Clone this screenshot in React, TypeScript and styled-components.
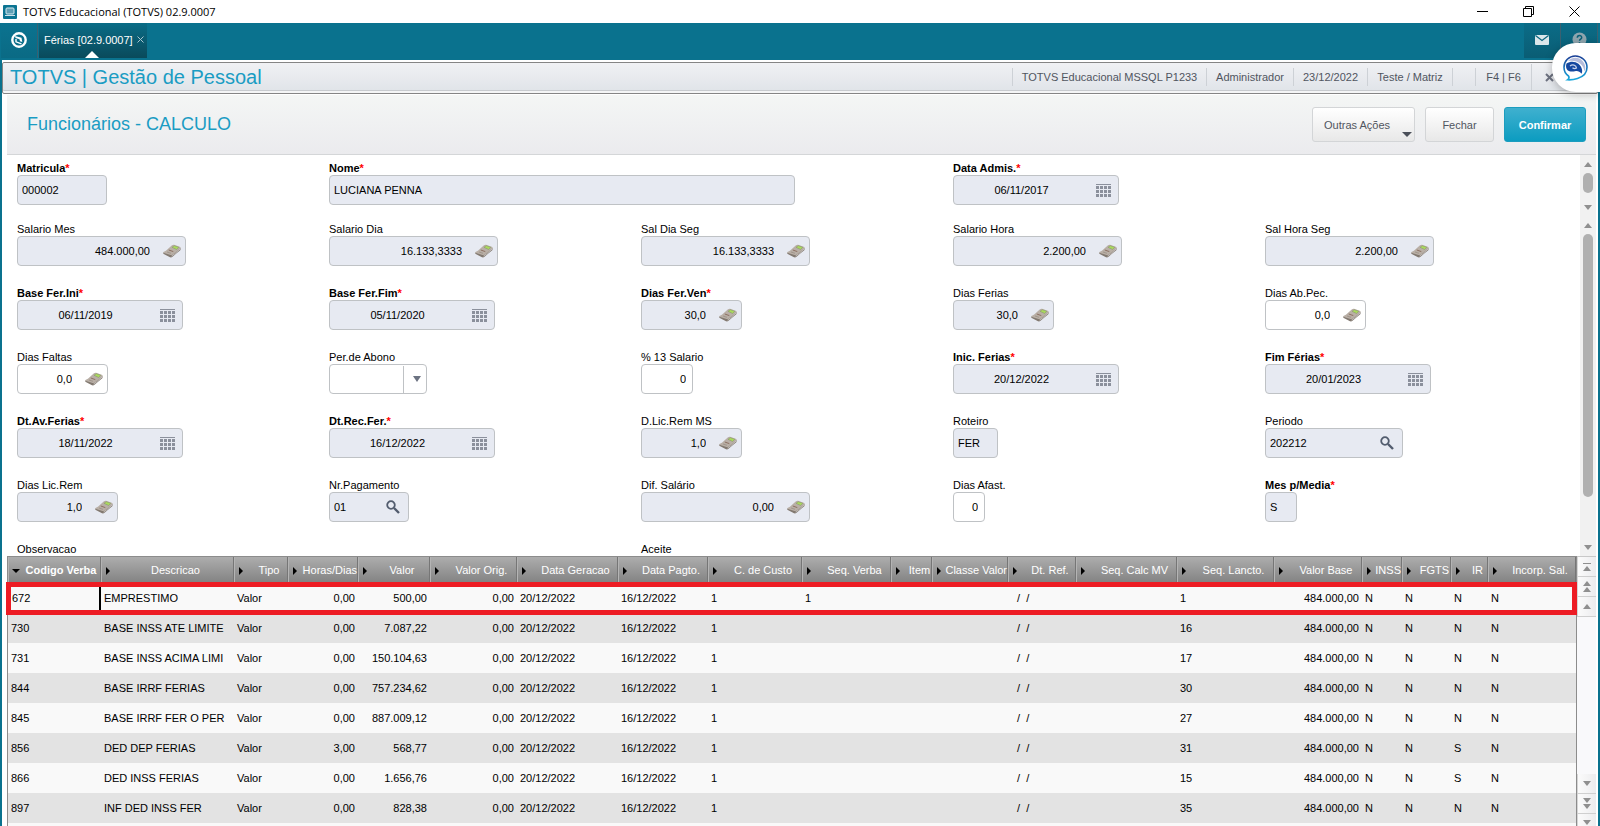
import React from "react";
import styled, { createGlobalStyle, css } from "styled-components";

const GlobalStyle = createGlobalStyle`
  * { box-sizing: border-box; }
  body { margin: 0; background: #fff; font-family: "Liberation Sans", Arial, sans-serif; font-size: 11px; color: #000; }
  button, input, select, textarea { font: inherit; color: inherit; }
  button { cursor: pointer; padding: 0; }
`;

/* ---------- window frame ---------- */

const Window = styled.div`
  display: flex;
  flex-direction: column;
  height: 100vh;
  overflow: hidden;
`;

const TitleBar = styled.header`
  display: flex;
  align-items: center;
  flex: 0 0 23px;
  padding: 0 3px;
  background: #fff;
`;

const WindowTitle = styled.span`
  flex: 1;
  margin-left: 6px;
  font-family: "Open Sans", "Noto Sans", sans-serif;
  font-size: 11px;
  line-height: 22px;
`;

const WindowButton = styled.button`
  display: flex;
  align-items: center;
  justify-content: center;
  width: 46px;
  height: 21px;
  border: 0;
  background: none;
`;

const TabBar = styled.nav`
  display: flex;
  flex: 0 0 37px;
  padding: 0 2px 2px 1px;
  background: #0a728e;
`;

const BarButton = styled.button<{ $dark?: boolean }>`
  display: flex;
  align-items: center;
  justify-content: center;
  width: 37px;
  padding-bottom: 2px;
  border: 0;
  border-right: 1px solid #3a6070;
  background: ${(p) =>
    p.$dark ? "linear-gradient(#0b6c87, #0a5d74)" : "linear-gradient(#0b7390, #0a6a84)"};
`;

const Tab = styled.div`
  position: relative;
  display: flex;
  align-items: center;
  gap: 4px;
  width: 108px;
  margin-left: 1px;
  padding: 0 0 2px 5px;
  color: #fff;
  background: linear-gradient(#0a6c86, #0a4a5b);
  &::after {
    content: "";
    position: absolute;
    left: 46px;
    bottom: 0;
    border: 7px solid transparent;
    border-top: 0;
    border-bottom-color: #fff;
  }
`;

const TabLabel = styled.button`
  border: 0;
  background: none;
  white-space: nowrap;
`;

const TabClose = styled.button`
  display: flex;
  border: 0;
  background: none;
`;

const Spacer = styled.div`
  flex: 1;
`;

const ChatButton = styled.button`
  position: absolute;
  top: 43px;
  right: 0;
  display: flex;
  align-items: center;
  justify-content: center;
  width: 48px;
  height: 49px;
  padding-right: 2px;
  border: 0;
  border-radius: 24px 0 0 24px;
  background: #fff;
  box-shadow: 0 2px 8px rgba(0, 0, 0, 0.25);
`;

/* ---------- module header ---------- */

const Body = styled.main`
  display: flex;
  flex: 1;
  flex-direction: column;
  min-height: 0;
  padding-top: 2px;
  border: solid #0a728e;
  border-width: 0 2px;
`;

const ModuleBar = styled.div`
  display: flex;
  align-items: center;
  flex: 0 0 32px;
  padding: 0 0 2px 7px;
  border: 1px solid #858585;
  border-radius: 2px;
  background: linear-gradient(#f0f1f4, #dfe3e8);
  box-shadow: inset 0 -2px 0 #f4f5f6, inset 0 -3px 0 #c8cbcf;
`;

const ModuleTitle = styled.h1`
  flex: 1;
  margin: 0;
  color: #1a9cc3;
  font-size: 20px;
  font-weight: 400;
  line-height: 28px;
`;

const SessionItem = styled.span<{ $width: number }>`
  display: flex;
  align-items: center;
  justify-content: center;
  width: ${(p) => p.$width}px;
  height: 18px;
  border-left: 1px solid #cdd1d6;
  color: #50555f;
`;

const SessionClose = styled.button`
  display: flex;
  align-items: center;
  width: 66px;
  height: 26px;
  padding-left: 13px;
  border: 0;
  border-left: 1px solid #cdd1d6;
  background: none;
`;

const Content = styled.div`
  display: flex;
  flex: 1;
  flex-direction: column;
  min-height: 0;
  padding: 1px 2px 0 5px;
`;

const PageHeader = styled.div`
  display: flex;
  align-items: center;
  gap: 10px;
  flex: 0 0 60px;
  padding: 0 10px 0 20px;
  border-bottom: 1px solid #d4d6d8;
  background: linear-gradient(#f4f6f5, #ebebee);
`;

const PageTitle = styled.h2`
  flex: 1;
  margin: 0;
  padding-bottom: 2px;
  color: #1a9cc3;
  font-size: 18px;
  font-weight: 400;
  line-height: 20px;
`;

const ActionButton = styled.button<{ $width: number; $primary?: boolean }>`
  position: relative;
  width: ${(p) => p.$width}px;
  height: 35px;
  border: 1px solid #d3d5d7;
  border-radius: 3px;
  color: #50555f;
  background: linear-gradient(#fff, #e8e8e8);
  ${(p) =>
    p.$primary &&
    css`
      border-color: #1c9dbf;
      color: #fff;
      font-weight: 700;
      background: linear-gradient(#3fb0cf, #0c9cc0);
    `}
`;

const MenuButton = styled(ActionButton)`
  padding: 0 22px 0 11px;
  text-align: left;
  &::after {
    content: "";
    position: absolute;
    right: 2px;
    bottom: 4px;
    border: 5px solid transparent;
    border-bottom: 0;
    border-top-color: #4a4f59;
  }
`;

/* ---------- form ---------- */

const Pane = styled.section<{ $height: number }>`
  display: flex;
  flex: 0 0 ${(p) => p.$height}px;
  overflow: hidden;
`;

const FieldGrid = styled.div`
  display: grid;
  flex: 1;
  grid-template-columns: repeat(5, 1fr);
  align-content: start;
  row-gap: 20px;
  padding: 6px 3px 0 10px;
`;

const FieldBlock = styled.div<{ $column: number; $span?: number }>`
  grid-column: ${(p) => p.$column} / span ${(p) => p.$span ?? 1};
`;

const FieldLabel = styled.label<{ $required?: boolean }>`
  display: block;
  line-height: 14px;
  font-weight: ${(p) => (p.$required ? 700 : 400)};
`;

const Asterisk = styled.span`
  color: #f00;
`;

const FieldBox = styled.div<{ $width: number; $locked?: boolean }>`
  display: flex;
  align-items: center;
  width: ${(p) => p.$width}px;
  height: 30px;
  border: 1px solid #bfc2c5;
  border-radius: 4px;
  background: ${(p) => (p.$locked ? "#e7eaf2" : "#fff")};
`;

const trailingSpace: Record<Kind, number> = {
  text: 0,
  search: 0,
  select: 0,
  integer: 6,
  date: 11,
  number: 13,
};

const FieldInput = styled.input<{ $kind: Kind }>`
  flex: 1;
  min-width: 0;
  height: 28px;
  padding: 0 ${(p) => trailingSpace[p.$kind]}px 0 4px;
  border: 0;
  outline: 0;
  background: none;
  text-align: ${(p) =>
    p.$kind === "number" || p.$kind === "integer" ? "right" : p.$kind === "date" ? "center" : "left"};
`;

const IconButton = styled.button`
  display: flex;
  align-items: center;
  justify-content: flex-start;
  width: 22px;
  height: 28px;
  border: 0;
  background: none;
`;

const SelectBox = styled(FieldBox)`
  position: relative;
  &::before {
    content: "";
    position: absolute;
    top: 1px;
    right: 22px;
    bottom: 0;
    border-left: 1px solid #bfc2c5;
  }
  &::after {
    content: "";
    position: absolute;
    right: 5px;
    border: 4px solid transparent;
    border-top: 6px solid #6c7382;
    border-bottom: 0;
  }
`;

const SelectInput = styled.select`
  width: 100%;
  height: 28px;
  border: 0;
  appearance: none;
  background: none;
`;

const ScrollTrack = styled.div`
  display: flex;
  flex: 0 0 16px;
  flex-direction: column;
  align-items: center;
  background: #f1f1f1;
`;

const ScrollStep = styled.button`
  display: flex;
  align-items: center;
  justify-content: center;
  flex: 0 0 18px;
  width: 16px;
  border: 0;
  background: none;
`;

const ScrollThumb = styled.div<{ $length: number }>`
  width: 10px;
  height: ${(p) => p.$length}px;
  border-radius: 5px;
  background: #b0b0b0;
`;

/* ---------- grid ---------- */

const GridSection = styled.section`
  display: flex;
  flex: 1 0 278px;
`;

const GridFrame = styled.div`
  position: relative;
  flex: 1;
  min-width: 0;
  border: solid #8c8c8c;
  border-width: 1px 1px 0;
  background: #f9f9f9;
`;

const DataTable = styled.table`
  width: 100%;
  table-layout: fixed;
  border-collapse: separate;
  border-spacing: 0;
`;

const HeadCell = styled.th<{ $sorted?: boolean }>`
  height: 26px;
  padding: 0;
  border-left: 1px solid #b4b4b4;
  border-right: 1px solid #767676;
  color: #fff;
  font-weight: ${(p) => (p.$sorted ? 700 : 400)};
  background: linear-gradient(#adadad, #828282);
`;

/* The gap after the sort mark gives way when a title needs the room. */
const HeadInner = styled.div<{ $sorted?: boolean }>`
  display: flex;
  align-items: center;
  &::before {
    content: "";
    flex: 0 1 ${(p) => (p.$sorted ? 2 : 8)}px;
  }
`;

const HeadText = styled.span`
  flex: 1 0 auto;
  line-height: 16px;
  text-align: center;
  white-space: nowrap;
`;

const SortMark = styled.span<{ $sorted?: boolean }>`
  flex: 0 0 auto;
  order: -1;
  margin: 2px 0 0 ${(p) => (p.$sorted ? 3 : 4)}px;
  border: solid transparent;
  ${(p) =>
    p.$sorted
      ? css`
          border-width: 4px 4px 0;
          border-top-color: #000;
        `
      : css`
          border-width: 4px 0 4px 4px;
          border-left-color: #000;
        `}
`;

const BodyRow = styled.tr`
  background: #f9f9f9;
  &:nth-child(even) {
    background: #e3e3e3;
  }
`;

const Cell = styled.td<{ $numeric?: boolean; $active?: boolean }>`
  height: 30px;
  padding: 0 3px;
  overflow: hidden;
  line-height: 16px;
  text-align: ${(p) => (p.$numeric ? "right" : "left")};
  white-space: pre;
  ${(p) =>
    p.$active &&
    css`
      padding-left: 4px;
      border-right: 2px solid #000;
    `}
`;

const RowHighlight = styled.div`
  position: absolute;
  top: 25px;
  left: -2px;
  right: -1px;
  height: 33px;
  border: 5px solid #ed1c24;
  pointer-events: none;
`;

const GridNav = styled.div`
  display: flex;
  flex: 0 0 19px;
  flex-direction: column;
  border-top: 1px solid #c8c8c8;
  background: #f9f9fb;
`;

const NavButton = styled.button`
  display: flex;
  flex: 0 0 20px;
  flex-direction: column;
  align-items: center;
  justify-content: center;
  gap: 1px;
  border: 0;
  border-left: 1px solid #d5d5d5;
  border-bottom: 1px solid #cfcfcf;
  background: linear-gradient(90deg, #fbfbfb, #ececee);
`;

const Triangle = styled.span<{ $down?: boolean }>`
  border: solid transparent;
  border-width: ${(p) => (p.$down ? "5px 4px 0" : "0 4px 5px")};
  ${(p) => (p.$down ? "border-top-color" : "border-bottom-color")}: #8f8f8f;
`;

const Bar = styled.span`
  width: 8px;
  height: 1px;
  margin-bottom: 1px;
  background: #8f8f8f;
`;

/* ---------- icons ---------- */

const AppIcon = () => (
  <svg width="14" height="14" viewBox="0 0 14 14" aria-hidden="true">
    <rect width="14" height="14" rx="1" fill="#0b7492" />
    <rect x="3" y="3" width="8" height="6" rx="1" fill="#5f9fb5" stroke="#d7e8ee" />
    <path d="M2 10h10v1H2z" fill="#cfe2e9" />
  </svg>
);

const MinimizeIcon = () => (
  <svg width="11" height="11" viewBox="0 0 11 11" aria-hidden="true">
    <path d="M0 5.500h11" stroke="#000" />
  </svg>
);

const RestoreIcon = () => (
  <svg width="11" height="11" viewBox="0 0 11 11" fill="none" stroke="#000" aria-hidden="true">
    <path d="M.5 2.500h8v8h-8zM2.500 2.500v-2h8v8h-2" />
  </svg>
);

const CloseIcon = () => (
  <svg width="11" height="11" viewBox="0 0 11 11" stroke="#000" aria-hidden="true">
    <path d="M.5.5l10 10M10.500.5l-10 10" />
  </svg>
);

const LogoIcon = () => (
  <svg width="16" height="16" viewBox="0 0 16 16" fill="none" aria-hidden="true">
    <circle cx="8" cy="8" r="6.700" stroke="#fff" strokeWidth="2.400" />
    <path d="M4 4l6.500 1.800.8 4.200-2.300-.8-.5-2L4.500 6z" fill="#fff" />
    <path d="M5 7v2.800l5.500 2" stroke="#fff" strokeWidth="1.400" />
  </svg>
);

const TabCloseIcon = () => (
  <svg width="7" height="7" viewBox="0 0 7 7" stroke="#a9c6d0" aria-hidden="true">
    <path d="M.5.5l6 6M6.500.5l-6 6" />
  </svg>
);

const MailIcon = () => (
  <svg width="14" height="10" viewBox="0 0 14 10" aria-hidden="true">
    <rect width="14" height="10" rx="1" fill="#dbe6ea" />
    <path d="M.5.5L7 5.500 13.500.5" fill="none" stroke="#0a657e" strokeWidth="1.200" />
  </svg>
);

const HelpIcon = () => (
  <svg width="15" height="15" viewBox="0 0 15 15" fill="none" aria-hidden="true">
    <circle cx="7.500" cy="7.500" r="7" fill="#8fa5ae" />
    <path d="M5.300 5.800c0-3 4.400-3 4.400-.3 0 1.600-2.200 1.500-2.200 3.200M7.500 10.200v1.500" stroke="#0a6078" strokeWidth="1.500" />
  </svg>
);

const SessionCloseIcon = () => (
  <svg width="9" height="9" viewBox="0 0 9 9" stroke="#6d7280" strokeWidth="2" aria-hidden="true">
    <path d="M1 1l7 7M8 1L1 8" />
  </svg>
);

const ChatIcon = () => (
  <svg width="25" height="26" viewBox="0 0 25 26" fill="none" aria-hidden="true">
    <defs>
      <linearGradient id="chat-ring" x1="0" y1="0" x2="0" y2="1">
        <stop offset="0" stopColor="#1b3f96" />
        <stop offset="1" stopColor="#18a8dd" />
      </linearGradient>
    </defs>
    <path
      d="M5.500 21C2.500 19 1 15.500 1 12.300 1 6 6 1 12.300 1S24 6 24 12.300c0 6-4.500 9.700-9.500 11.200-3.500 1.200-7 1.500-10 1.300 1.500-1 2-2.300 1-3.800z"
      fill="#fff"
      stroke="url(#chat-ring)"
      strokeWidth="1.600"
    />
    <path d="M5 6c4.500-4.500 11-4 14.500 0 3 3.300 3.500 7.500 2 10.500C20.500 9 14 4.500 5 6z" fill="#b4bcdb" />
    <path
      d="M3.500 8.500C10 4.500 17.500 8 19 14.500c.4 2 0 3.300-.5 4.300-1.500-2.300-3.500-3-5.500-2.800-2.500.4-4.500 1-6.500.3C3.500 15.300 2.300 12 3.500 8.500z"
      fill="#1548a0"
    />
    <path d="M7 11c2.500-2 6-1 6.500 2-1.500 1-3 .5-4-.3" stroke="#c9d2ea" strokeWidth="1.300" />
  </svg>
);

const CalendarIcon = () => (
  <svg width="15" height="13" viewBox="0 0 15 13" fill="#8b909c" aria-hidden="true">
    <rect width="15" height="1" />
    {[2, 6, 10].map((y) => [0, 4, 8, 12].map((x) => <rect key={`${x}-${y}`} x={x} y={y} width="3" height="3" />))}
  </svg>
);

const CalculatorIcon = () => (
  <svg width="18" height="14" viewBox="0 0 18 14" aria-hidden="true">
    <path d="M.3 8.500v1.300l6.700 3.500c1 .3 2-.1 2.800-.9L17.500 6V4z" fill="#827970" />
    <path d="M.5 8C3 7.500 6 3.500 9 1.300c1-.7 1.700-.7 2.700-.4l5 1.800c1.200.5 1.200 1.100.5 1.800L10.500 10c-1 .9-1.900 1.300-3 .9L1 9C.2 8.700 0 8.200.5 8z" fill="#b9afa6" />
    <path d="M9 3.300l2.300-1.600 4.500 1.500-2.200 2.300z" fill="#a9d95c" stroke="#84936b" strokeWidth=".5" />
    <path d="M5.800 6l4.500 1.600" stroke="#8c6f62" />
    <path d="M4 8l4 1.300" stroke="#9b8f85" strokeWidth=".8" />
    <path d="M8.500 12l3-2 5.500-5" fill="none" stroke="#d5d0cb" strokeWidth=".8" />
  </svg>
);

const SearchIcon = () => (
  <svg width="14" height="14" viewBox="0 0 14 14" fill="none" stroke="#525c6e" aria-hidden="true">
    <circle cx="5" cy="5" r="3.800" strokeWidth="1.800" />
    <path d="M8 8l5 5" strokeWidth="2.400" />
  </svg>
);

/* ---------- data ---------- */

type Kind = "text" | "number" | "integer" | "date" | "search" | "select";

interface FieldData {
  id: string;
  label: string;
  value?: string;
  kind: Kind;
  column: number;
  width: number;
  span?: number;
  required?: boolean;
  locked?: boolean;
}

const identityFields: FieldData[] = [
  { id: "matricula", label: "Matricula", value: "000002", kind: "text", column: 1, width: 90, required: true, locked: true },
  { id: "nome", label: "Nome", value: "LUCIANA PENNA", kind: "text", column: 2, span: 2, width: 466, required: true, locked: true },
  { id: "admissao", label: "Data Admis.", value: "06/11/2017", kind: "date", column: 4, width: 166, required: true, locked: true },
];

const vacationFields: FieldData[] = [
  { id: "salMes", label: "Salario Mes", value: "484.000,00", kind: "number", column: 1, width: 169, locked: true },
  { id: "salDia", label: "Salario Dia", value: "16.133,3333", kind: "number", column: 2, width: 169, locked: true },
  { id: "salDiaSeg", label: "Sal Dia Seg", value: "16.133,3333", kind: "number", column: 3, width: 169, locked: true },
  { id: "salHora", label: "Salario Hora", value: "2.200,00", kind: "number", column: 4, width: 169, locked: true },
  { id: "salHoraSeg", label: "Sal Hora Seg", value: "2.200,00", kind: "number", column: 5, width: 169, locked: true },
  { id: "baseIni", label: "Base Fer.Ini", value: "06/11/2019", kind: "date", column: 1, width: 166, required: true, locked: true },
  { id: "baseFim", label: "Base Fer.Fim", value: "05/11/2020", kind: "date", column: 2, width: 166, required: true, locked: true },
  { id: "ferVen", label: "Dias Fer.Ven", value: "30,0", kind: "number", column: 3, width: 101, required: true, locked: true },
  { id: "diasFerias", label: "Dias Ferias", value: "30,0", kind: "number", column: 4, width: 101, locked: true },
  { id: "abPec", label: "Dias Ab.Pec.", value: "0,0", kind: "number", column: 5, width: 101 },
  { id: "faltas", label: "Dias Faltas", value: "0,0", kind: "number", column: 1, width: 91 },
  { id: "abono", label: "Per.de Abono", kind: "select", column: 2, width: 98 },
  { id: "salario13", label: "% 13 Salario", value: "0", kind: "integer", column: 3, width: 52 },
  { id: "inicFerias", label: "Inic. Ferias", value: "20/12/2022", kind: "date", column: 4, width: 166, required: true, locked: true },
  { id: "fimFerias", label: "Fim Férias", value: "20/01/2023", kind: "date", column: 5, width: 166, required: true, locked: true },
  { id: "avFerias", label: "Dt.Av.Ferias", value: "18/11/2022", kind: "date", column: 1, width: 166, required: true, locked: true },
  { id: "recFer", label: "Dt.Rec.Fer.", value: "16/12/2022", kind: "date", column: 2, width: 166, required: true, locked: true },
  { id: "licRemMs", label: "D.Lic.Rem MS", value: "1,0", kind: "number", column: 3, width: 101, locked: true },
  { id: "roteiro", label: "Roteiro", value: "FER", kind: "text", column: 4, width: 45, locked: true },
  { id: "periodo", label: "Periodo", value: "202212", kind: "search", column: 5, width: 138, locked: true },
  { id: "licRem", label: "Dias Lic.Rem", value: "1,0", kind: "number", column: 1, width: 101, locked: true },
  { id: "nrPagamento", label: "Nr.Pagamento", value: "01", kind: "search", column: 2, width: 80, locked: true },
  { id: "difSalario", label: "Dif. Salário", value: "0,00", kind: "number", column: 3, width: 169, locked: true },
  { id: "afast", label: "Dias Afast.", value: "0", kind: "integer", column: 4, width: 32 },
  { id: "mesMedia", label: "Mes p/Media", value: "S", kind: "text", column: 5, width: 32, required: true, locked: true },
  { id: "observacao", label: "Observacao", kind: "text", column: 1, width: 270 },
  { id: "aceite", label: "Aceite", kind: "text", column: 3, width: 101 },
];

const columns: { title: string; width: number; numeric?: boolean }[] = [
  { title: "Codigo Verba", width: 93 },
  { title: "Descricao", width: 133 },
  { title: "Tipo", width: 54 },
  { title: "Horas/Dias", width: 70, numeric: true },
  { title: "Valor", width: 72, numeric: true },
  { title: "Valor Orig.", width: 87, numeric: true },
  { title: "Data Geracao", width: 101 },
  { title: "Data Pagto.", width: 90 },
  { title: "C. de Custo", width: 94 },
  { title: "Seq. Verba", width: 89 },
  { title: "Item", width: 41 },
  { title: "Classe Valor", width: 76 },
  { title: "Dt. Ref.", width: 68 },
  { title: "Seq. Calc MV", width: 101 },
  { title: "Seq. Lancto.", width: 97 },
  { title: "Valor Base", width: 88, numeric: true },
  { title: "INSS", width: 40 },
  { title: "FGTS", width: 49 },
  { title: "IR", width: 37 },
  { title: "Incorp. Sal.", width: 88 },
];

const makeRow = (code: string, name: string, hours: string, value: string, seqVerba: string, seqLancto: string, ir: string) => [
  code, name, "Valor", hours, value, "0,00", "20/12/2022", "16/12/2022", "1", seqVerba,
  "", "", "  /  /", "", seqLancto, "484.000,00", "N", "N", ir, "N",
];

const rows = [
  makeRow("672", "EMPRESTIMO", "0,00", "500,00", "1", "1", "N"),
  makeRow("730", "BASE INSS ATE LIMITE", "0,00", "7.087,22", "", "16", "N"),
  makeRow("731", "BASE INSS ACIMA LIMI", "0,00", "150.104,63", "", "17", "N"),
  makeRow("844", "BASE IRRF FERIAS", "0,00", "757.234,62", "", "30", "N"),
  makeRow("845", "BASE IRRF FER O PER", "0,00", "887.009,12", "", "27", "N"),
  makeRow("856", "DED DEP FERIAS", "3,00", "568,77", "", "31", "S"),
  makeRow("866", "DED INSS FERIAS", "0,00", "1.656,76", "", "15", "S"),
  makeRow("897", "INF DED INSS FER", "0,00", "828,38", "", "35", "N"),
];

/* ---------- components ---------- */

const Field = ({ field }: { field: FieldData }) => (
  <FieldBlock $column={field.column} $span={field.span}>
    <FieldLabel htmlFor={field.id} $required={field.required}>
      {field.label}
      {field.required && <Asterisk>*</Asterisk>}
    </FieldLabel>
    {field.kind === "select" ? (
      <SelectBox $width={field.width}>
        <SelectInput id={field.id}>
          <option value="" />
        </SelectInput>
      </SelectBox>
    ) : (
      <FieldBox $width={field.width} $locked={field.locked}>
        <FieldInput id={field.id} $kind={field.kind} defaultValue={field.value} readOnly={field.locked} />
        {field.kind === "number" && (
          <IconButton type="button" aria-label={`Calculadora ${field.label}`}>
            <CalculatorIcon />
          </IconButton>
        )}
        {field.kind === "date" && (
          <IconButton type="button" aria-label={`Calendário ${field.label}`}>
            <CalendarIcon />
          </IconButton>
        )}
        {field.kind === "search" && (
          <IconButton type="button" aria-label={`Pesquisar ${field.label}`}>
            <SearchIcon />
          </IconButton>
        )}
      </FieldBox>
    )}
  </FieldBlock>
);

const Scrollbar = ({ thumb }: { thumb: number }) => (
  <ScrollTrack>
    <ScrollStep type="button" aria-label="Rolar para cima">
      <Triangle />
    </ScrollStep>
    <ScrollThumb $length={thumb} />
    <Spacer />
    <ScrollStep type="button" aria-label="Rolar para baixo">
      <Triangle $down />
    </ScrollStep>
  </ScrollTrack>
);

export default function App() {
  return (
    <Window>
      <GlobalStyle />
      <TitleBar>
        <AppIcon />
        <WindowTitle>TOTVS Educacional (TOTVS) 02.9.0007</WindowTitle>
        <WindowButton aria-label="Minimizar"><MinimizeIcon /></WindowButton>
        <WindowButton aria-label="Restaurar"><RestoreIcon /></WindowButton>
        <WindowButton aria-label="Fechar janela"><CloseIcon /></WindowButton>
      </TitleBar>

      <TabBar>
        <BarButton aria-label="Início"><LogoIcon /></BarButton>
        <Tab>
          <TabLabel>Férias [02.9.0007]</TabLabel>
          <TabClose aria-label="Fechar aba"><TabCloseIcon /></TabClose>
        </Tab>
        <Spacer />
        <BarButton $dark aria-label="Mensagens"><MailIcon /></BarButton>
        <BarButton $dark aria-label="Ajuda"><HelpIcon /></BarButton>
      </TabBar>

      <Body>
        <ModuleBar>
          <ModuleTitle>TOTVS | Gestão de Pessoal</ModuleTitle>
          <SessionItem $width={194}>TOTVS Educacional MSSQL P1233</SessionItem>
          <SessionItem $width={87}>Administrador</SessionItem>
          <SessionItem $width={74}>23/12/2022</SessionItem>
          <SessionItem $width={85}>Teste / Matriz</SessionItem>
          <SessionItem $width={23} />
          <SessionItem $width={56}>F4 | F6</SessionItem>
          <SessionClose aria-label="Encerrar"><SessionCloseIcon /></SessionClose>
        </ModuleBar>

        <Content>
          <PageHeader>
            <PageTitle>Funcionários - CALCULO</PageTitle>
            <MenuButton $width={103}>Outras Ações</MenuButton>
            <ActionButton $width={69}>Fechar</ActionButton>
            <ActionButton $width={82} $primary>Confirmar</ActionButton>
          </PageHeader>

          <Pane $height={61}>
            <FieldGrid>
              {identityFields.map((f) => <Field key={f.id} field={f} />)}
            </FieldGrid>
            <Scrollbar thumb={20} />
          </Pane>
          <Pane $height={340}>
            <FieldGrid>
              {vacationFields.map((f) => <Field key={f.id} field={f} />)}
            </FieldGrid>
            <Scrollbar thumb={263} />
          </Pane>

          <GridSection>
            <GridFrame>
              <DataTable>
                <colgroup>
                  {columns.map((c) => <col key={c.title} width={c.width} />)}
                </colgroup>
                <thead>
                  <tr>
                    {columns.map((c, i) => (
                      <HeadCell key={c.title} $sorted={i === 0} scope="col">
                        <HeadInner $sorted={i === 0}>
                          <SortMark $sorted={i === 0} />
                          <HeadText>{c.title}</HeadText>
                        </HeadInner>
                      </HeadCell>
                    ))}
                  </tr>
                </thead>
                <tbody>
                  {rows.map((row, r) => (
                    <BodyRow key={row[0]}>
                      {row.map((value, i) => (
                        <Cell key={columns[i].title} $numeric={columns[i].numeric} $active={r === 0 && i === 0}>
                          {value}
                        </Cell>
                      ))}
                    </BodyRow>
                  ))}
                </tbody>
              </DataTable>
              <RowHighlight />
            </GridFrame>
            <GridNav>
              <NavButton aria-label="Primeiro registro"><Bar /><Triangle /></NavButton>
              <NavButton aria-label="Página anterior"><Triangle /><Triangle /></NavButton>
              <NavButton aria-label="Registro anterior"><Triangle /></NavButton>
              <Spacer />
              <NavButton aria-label="Próximo registro"><Triangle $down /></NavButton>
              <NavButton aria-label="Próxima página"><Triangle $down /><Triangle $down /></NavButton>
              <NavButton aria-label="Último registro"><Triangle $down /><Bar /></NavButton>
            </GridNav>
          </GridSection>
        </Content>
      </Body>
      <ChatButton aria-label="Abrir chat"><ChatIcon /></ChatButton>
    </Window>
  );
}
